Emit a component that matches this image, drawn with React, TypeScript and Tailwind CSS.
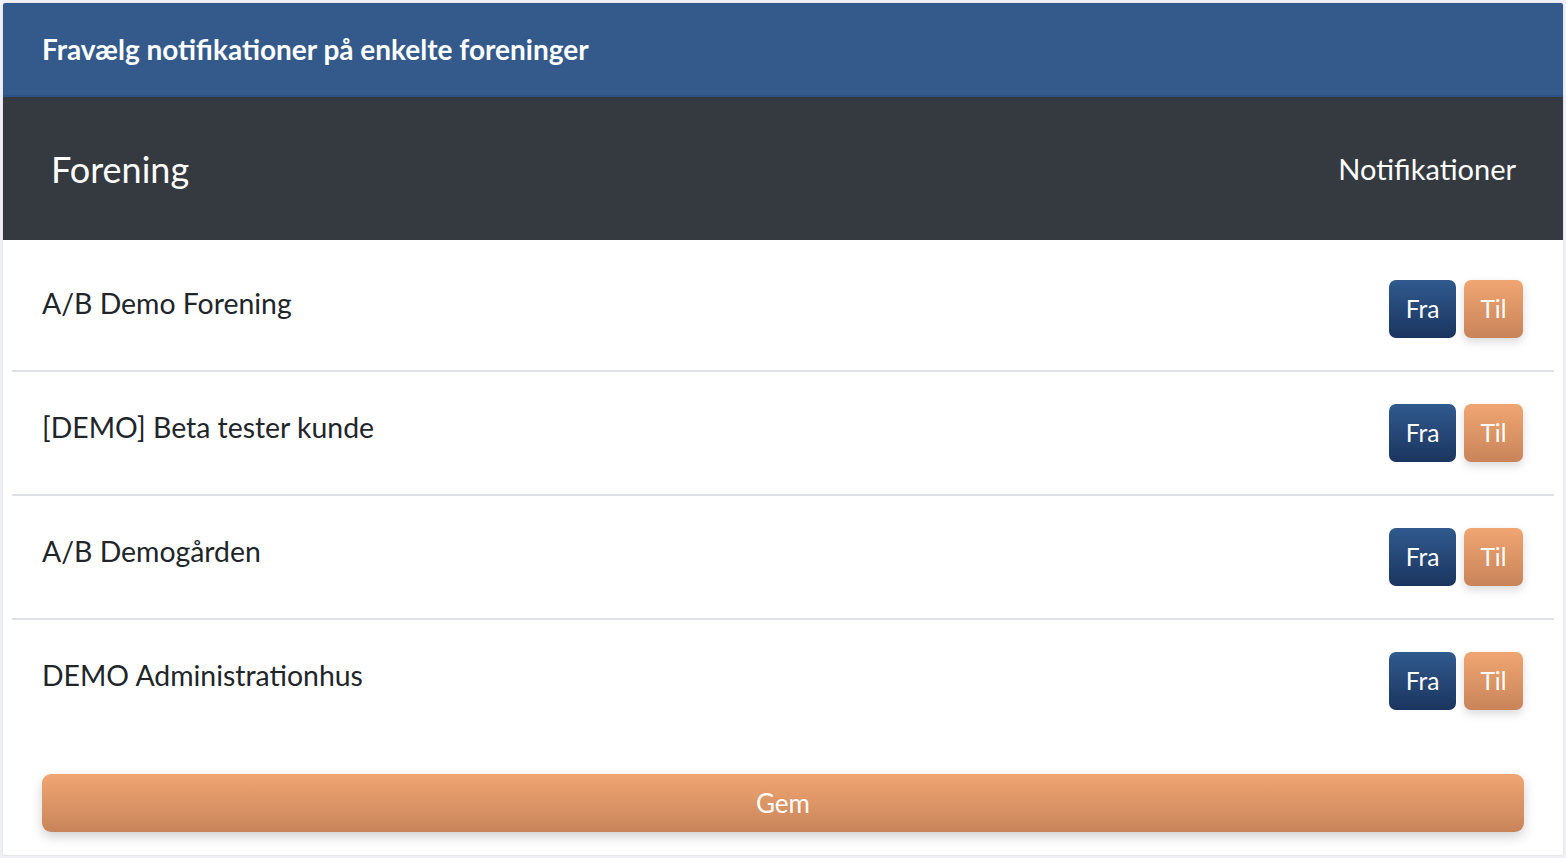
import React, { useState } from 'react';

type Choice = 'fra' | 'til';

const foreninger = [
  'A/B Demo Forening',
  '[DEMO] Beta tester kunde',
  'A/B Demogården',
  'DEMO Administrationhus',
];

const NotifikationToggle = ({ value, onChange }: { value: Choice; onChange: (v: Choice) => void }) => {
  return (
    <div className="flex gap-2">
      <button
        type="button"
        onClick={() => onChange('fra')}
        className="h-[58px] w-[67px] rounded-[7px] bg-gradient-to-b from-[#315a8e] to-[#1b355f] text-[24.5px] text-white"
      >
        Fra
      </button>
      <button
        type="button"
        onClick={() => onChange('til')}
        className="h-[58px] w-[59px] rounded-[7px] bg-gradient-to-b from-[#f0a672] to-[#c8845a] text-[24.5px] text-white shadow-[0_4px_10px_rgba(0,0,0,0.15)]"
      >
        Til
      </button>
    </div>
  );
};

const App = () => {
  const [choices, setChoices] = useState<Record<string, Choice>>({});

  return (
    <div className="min-h-screen bg-[#eef0f5] p-[2px] font-['Lato','Noto_Sans',sans-serif]">
      <div className="flex h-[854px] flex-col overflow-hidden rounded-[3px] border border-[#e4e7ec] bg-white">
        <div className="flex h-[94px] items-center border-b-2 border-[#2d5182] bg-[#345a8c] px-[39px]">
          <h1 className="text-[28px] font-bold text-white">
            Fravælg notifikationer på enkelte foreninger
          </h1>
        </div>

        <div className="flex h-[143px] items-center justify-between bg-[#343a40] pl-[48px] pr-[47px]">
          <span className="text-[36px] text-white">Forening</span>
          <span className="text-[29px] text-white">Notifikationer</span>
        </div>

        <div className="px-[9px] pt-[8px]">
          {foreninger.map((navn, i) => (
            <div
              key={navn}
              className={`flex h-[124px] justify-between pl-[30px] pr-[31px] ${
                i < foreninger.length - 1 ? 'border-b-2 border-[#dee2e6]' : ''
              }`}
            >
              <span className="pt-[38px] text-[28.4px] leading-[1.2] text-[#212529]">{navn}</span>
              <div className="pt-[32px]">
                <NotifikationToggle
                  value={choices[navn] ?? 'til'}
                  onChange={(v) => setChoices({ ...choices, [navn]: v })}
                />
              </div>
            </div>
          ))}

          <div className="px-[30px] pt-[30px]">
            <button
              type="button"
              className="h-[58px] w-full rounded-[9px] bg-gradient-to-b from-[#f0a672] to-[#c8845a] text-[26px] text-white shadow-[0_5px_12px_rgba(0,0,0,0.18)]"
            >
              Gem
            </button>
          </div>
        </div>
      </div>
    </div>
  );
};

export default App;
